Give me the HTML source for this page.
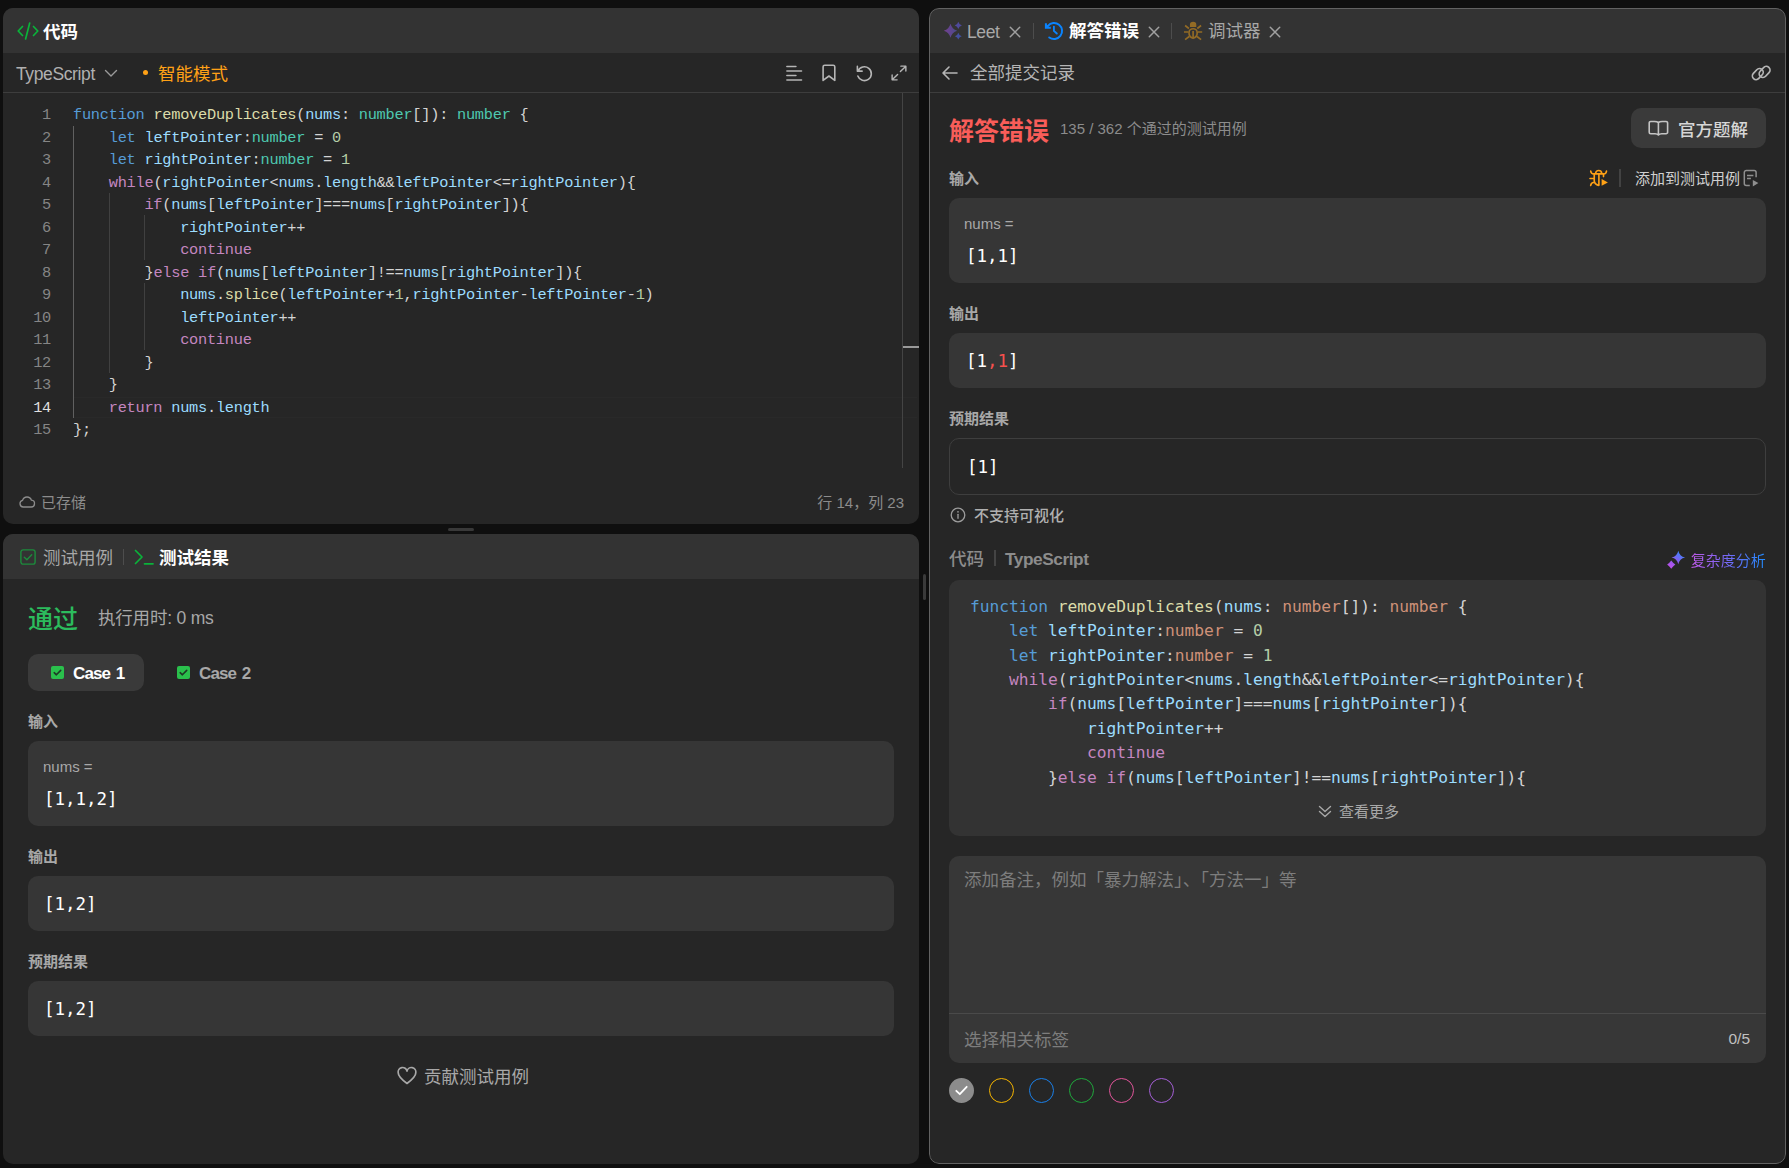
<!DOCTYPE html>
<html lang="zh-CN">
<head>
<meta charset="utf-8">
<title>LeetCode</title>
<style>
*{box-sizing:border-box;margin:0;padding:0}
html,body{width:1789px;height:1168px;overflow:hidden;background:#0f0f0f}
body{position:relative;font-family:"Liberation Sans","Noto Sans CJK SC",sans-serif;color:#f5f5f5;font-size:17.5px;-webkit-font-smoothing:antialiased}
.abs{position:absolute}
.panel{position:absolute;background:#262626;border-radius:10px;overflow:hidden}
.hdr{position:absolute;left:0;top:0;right:0;height:45px;background:#333333}
.t{position:absolute;white-space:nowrap;line-height:1;}
.b{font-weight:700}
.g{color:#a3a3a3}
.mono{font-family:"DejaVu Sans Mono","Liberation Mono",monospace;font-size:17.5px !important;letter-spacing:-0.03px}
.box{position:absolute;background:#363636;border-radius:10px}
.hline{position:absolute;height:1px;background:#3d3d3d}
.vline{position:absolute;width:1px;background:#4a4a4a}
svg{position:absolute;overflow:visible}
/* editor */
.ed{position:absolute;left:0;top:0;font-family:"Liberation Mono",monospace;font-size:15.3px;letter-spacing:-0.25px;line-height:22.5px;white-space:pre;color:#d4d4d4}
.ln{position:absolute;white-space:pre;width:48px;text-align:right;font-family:"Liberation Mono",monospace;font-size:15.3px;letter-spacing:-0.25px;line-height:22.5px;color:#858585}
.k{color:#569cd6}.c{color:#c586c0}.ty{color:#4ec9b0}.v{color:#9cdcfe}.n{color:#b5cea8}.f{color:#dcdcaa}.p{color:#d4d4d4}
/* right code */
.rc{position:absolute;font-family:"DejaVu Sans Mono","Liberation Mono",monospace;font-size:16.25px;letter-spacing:-0.03px;line-height:24.4px;white-space:pre;color:#d4d4d4}
.rc .ty{color:#ce9178}
</style>
</head>
<body>

<!-- ============ LEFT TOP PANEL: code editor ============ -->
<div class="panel" id="p1" style="left:3px;top:8px;width:916px;height:516px">
  <div class="hdr"></div>
  <!-- code icon -->
  <svg style="left:14px;top:14px" width="22" height="18" viewBox="0 0 22 18" fill="none" stroke="#0ab33a" stroke-width="1.7" stroke-linecap="round" stroke-linejoin="round"><path d="M5.5 4.5L1.2 9l4.3 4.5M16.5 4.5L20.8 9l-4.3 4.5M12.7 1L8.6 17"/></svg>
  <div class="t b" style="left:40px;top:15.5px;font-size:17.5px;color:#fff">代码</div>
  <!-- toolbar -->
  <div class="t" style="left:13px;top:57.5px;font-size:17.5px;letter-spacing:-0.38px;color:#b0b0b0" id="ts1">TypeScript</div>
  <svg style="left:101px;top:61px" width="14" height="9" viewBox="0 0 14 9" fill="none" stroke="#9a9a9a" stroke-width="1.4" stroke-linecap="round" stroke-linejoin="round"><path d="M1.5 1.5L7 7l5.5-5.5"/></svg>
  <div class="abs" style="left:140px;top:62px;width:5px;height:5px;border-radius:50%;background:#ffa116"></div>
  <div class="t" style="left:155px;top:57.5px;font-size:17.5px;color:#ffa116">智能模式</div>
  <!-- toolbar icons -->
  <svg style="left:782px;top:55.8px" width="18" height="18" viewBox="0 0 18 18" fill="none" stroke="#b5b5b5" stroke-width="1.6" stroke-linecap="round"><path d="M1.9 2.5h9M1.9 7h14.6M1.9 11.5h9M1.9 16h14.6"/></svg>
  <svg style="left:818px;top:56px" width="16" height="20" viewBox="0 0 16 20" fill="none" stroke="#b5b5b5" stroke-width="1.6" stroke-linejoin="round"><path d="M2.1 2.8a1.6 1.6 0 0 1 1.6-1.6h8.500a1.600 1.600 0 0 1 1.600 1.600v13.600l-5.850-4.400-5.850 4.400z"/></svg>
  <svg style="left:851.5px;top:55.5px" width="19" height="19" viewBox="0 0 20 20" fill="none" stroke="#b5b5b5" stroke-width="1.7" stroke-linecap="round" stroke-linejoin="round"><path d="M2.5 2.5v5h5M3.2 7.3A7.3 7.3 0 1 1 3 12.6"/></svg>
  <svg style="left:888px;top:57px" width="16" height="16" viewBox="0 0 17 17" fill="none" stroke="#b5b5b5" stroke-width="1.5" stroke-linecap="round" stroke-linejoin="round"><path d="M10.5 1.2h5.3v5.3M15.5 1.5L10 7M6.5 15.8H1.2v-5.3M1.5 15.5L7 10"/></svg>
  <div class="hline" style="left:0;right:0;top:84px"></div>
  <!-- editor -->
  <div class="abs" style="left:70px;top:389px;width:844px;height:21px;border-top:1px solid #292929;border-bottom:1px solid #292929"></div>
  <div class="abs" style="left:70px;top:118px;width:1px;height:292px;background:#606060"></div>
  <div class="abs" style="left:106px;top:185px;width:1px;height:180px;background:#404040"></div>
  <div class="abs" style="left:141px;top:207px;width:1px;height:45px;background:#404040"></div>
  <div class="abs" style="left:141px;top:275px;width:1px;height:67px;background:#404040"></div>
  <div class="abs" style="left:899px;top:85px;width:1px;height:375px;background:#444"></div>
  <div class="abs" style="left:900px;top:338px;width:16px;height:2px;background:#9a9a9a"></div>
  <div class="ln" style="left:0;top:96.25px">1
2
3
4
5
6
7
8
9
10
11
12
13
<span style="color:#e0e0e0">14</span>
15</div>
  <div class="ed" style="left:70px;top:96.25px"><span class="k">function</span> <span class="f">removeDuplicates</span>(<span class="v">nums</span>: <span class="ty">number</span>[]): <span class="ty">number</span> {
    <span class="k">let</span> <span class="v">leftPointer</span>:<span class="ty">number</span> = <span class="n">0</span>
    <span class="k">let</span> <span class="v">rightPointer</span>:<span class="ty">number</span> = <span class="n">1</span>
    <span class="c">while</span>(<span class="v">rightPointer</span>&lt;<span class="v">nums</span>.<span class="v">length</span>&amp;&amp;<span class="v">leftPointer</span>&lt;=<span class="v">rightPointer</span>){
        <span class="c">if</span>(<span class="v">nums</span>[<span class="v">leftPointer</span>]===<span class="v">nums</span>[<span class="v">rightPointer</span>]){
            <span class="v">rightPointer</span>++
            <span class="c">continue</span>
        }<span class="c">else</span> <span class="c">if</span>(<span class="v">nums</span>[<span class="v">leftPointer</span>]!==<span class="v">nums</span>[<span class="v">rightPointer</span>]){
            <span class="v">nums</span>.<span class="f">splice</span>(<span class="v">leftPointer</span>+<span class="n">1</span>,<span class="v">rightPointer</span>-<span class="v">leftPointer</span>-<span class="n">1</span>)
            <span class="v">leftPointer</span>++
            <span class="c">continue</span>
        }
    }
    <span class="c">return</span> <span class="v">nums</span>.<span class="v">length</span>
};</div>
  <!-- footer -->
  <svg style="left:16px;top:487px" width="16" height="13" viewBox="0 0 16 13" fill="none" stroke="#8c8c8c" stroke-width="1.3" stroke-linejoin="round"><path d="M4.2 12A3.4 3.4 0 0 1 3.6 5.3 4.6 4.6 0 0 1 12.4 5.2 3.4 3.4 0 0 1 11.8 12z"/></svg>
  <div class="t" style="left:38px;top:486.800px;font-size:15px;color:#8c8c8c">已存储</div>
  <div class="t" style="right:15px;top:486.800px;font-size:15px;color:#8c8c8c">行 14，列 23</div>
</div>

<!-- resize handle -->
<div class="abs" style="left:448px;top:527.700px;width:26px;height:3px;border-radius:2px;background:#393939"></div>
<div class="abs" style="left:923px;top:574px;width:3px;height:26px;border-radius:2px;background:#3a3a3a"></div>

<!-- ============ LEFT BOTTOM PANEL: test result ============ -->
<div class="panel" id="p2" style="left:3px;top:534px;width:916px;height:630px">
  <div class="hdr"></div>
  <!-- tab icons -->
  <svg style="left:17px;top:15px" width="16" height="16" viewBox="0 0 16 16" fill="none" stroke="#1c8c3c" stroke-width="1.4" stroke-linecap="round" stroke-linejoin="round"><rect x="0.9" y="0.9" width="14.2" height="14.2" rx="2.2"/><path d="M4.3 8.2l2.6 2.5 4.8-5"/></svg>
  <div class="t" style="left:40px;top:15.700px;font-size:17.500px;color:#a8a8a8">测试用例</div>
  <div class="abs" style="left:120px;top:15px;width:1px;height:16px;background:#4d4d4d"></div>
  <svg style="left:131px;top:15px" width="20" height="16" viewBox="0 0 20 16" fill="none" stroke="#0ab33a" stroke-width="1.7" stroke-linecap="round" stroke-linejoin="round"><path d="M1.5 1.5L8 8l-6.5 6.5M10.5 14.8H19"/></svg>
  <div class="t b" style="left:156px;top:15.700px;font-size:17.500px;color:#fff">测试结果</div>
  <!-- result -->
  <div class="t" style="left:25px;top:72.500px;font-size:25px;font-weight:500;color:#2cbb5d">通过</div>
  <div class="t" style="left:95px;top:76px;font-size:17.500px;letter-spacing:-0.200px;color:#a8a8a8">执行用时: 0 ms</div>
  <!-- cases -->
  <div class="box" style="left:25px;top:120px;width:116px;height:37px;background:#3a3a3a"></div>
  <svg style="left:47.600px;top:131.500px" width="13" height="13" viewBox="0 0 13 13"><rect width="13" height="13" rx="2" fill="#2ac04c"/><path d="M3.2 6.7l2.2 2.1 4.3-4.4" fill="none" stroke="#1e3a26" stroke-width="1.6" stroke-linecap="round" stroke-linejoin="round"/></svg>
  <div class="t b" style="left:70px;top:130.800px;font-size:17px;letter-spacing:-0.900px;word-spacing:2px;color:#fff">Case 1</div>
  <svg style="left:173.600px;top:131.500px" width="13" height="13" viewBox="0 0 13 13"><rect width="13" height="13" rx="2" fill="#2ac04c"/><path d="M3.2 6.7l2.2 2.1 4.3-4.4" fill="none" stroke="#1e3a26" stroke-width="1.6" stroke-linecap="round" stroke-linejoin="round"/></svg>
  <div class="t b" style="left:196px;top:130.800px;font-size:17px;letter-spacing:-0.900px;word-spacing:2px;color:#a8a8a8">Case 2</div>
  <!-- input -->
  <div class="t b" style="left:25px;top:180px;font-size:15px;color:#a8a8a8">输入</div>
  <div class="box" style="left:25px;top:207px;width:866px;height:85px"></div>
  <div class="t" style="left:40px;top:225px;font-size:15px;color:#a8a8a8">nums =</div>
  <div class="t mono" style="left:41px;top:256.500px;font-size:16.25px;color:#fff">[1,1,2]</div>
  <!-- output -->
  <div class="t b" style="left:25px;top:315px;font-size:15px;color:#a8a8a8">输出</div>
  <div class="box" style="left:25px;top:342px;width:866px;height:55px"></div>
  <div class="t mono" style="left:41px;top:361.500px;font-size:16.25px;color:#fff">[1,2]</div>
  <!-- expected -->
  <div class="t b" style="left:25px;top:420px;font-size:15px;color:#a8a8a8">预期结果</div>
  <div class="box" style="left:25px;top:447px;width:866px;height:55px"></div>
  <div class="t mono" style="left:41px;top:466.500px;font-size:16.25px;color:#fff">[1,2]</div>
  <!-- contribute -->
  <svg style="left:394px;top:533px" width="20" height="18" viewBox="0 0 20 18" fill="none" stroke="#a8a8a8" stroke-width="1.7" stroke-linejoin="round"><path d="M10 16.5C6 13.5 1.2 10 1.2 5.8A4.4 4.4 0 0 1 10 4.2 4.4 4.4 0 0 1 18.8 5.8C18.8 10 14 13.5 10 16.5z"/></svg>
  <div class="t" style="left:421px;top:534.500px;font-size:17.500px;color:#a8a8a8">贡献测试用例</div>
</div>

<!-- ============ RIGHT PANEL: submission ============ -->
<div class="panel" id="p3" style="left:929px;top:8px;width:857px;height:1156px">
  <div class="hdr"></div>
  <!-- tabs -->
  <svg style="left:14px;top:12px" width="20" height="22" viewBox="0 0 20 22"><defs><linearGradient id="sg" x1="0" y1="0" x2="1" y2="0"><stop offset="0" stop-color="#73408f"/><stop offset="1" stop-color="#4b4a8c"/></linearGradient></defs><path fill="url(#sg)" d="M7.5 3.85Q8.97 9.23 14.20 10.75Q8.97 12.27 7.5 17.65Q6.03 12.27 0.80 10.75Q6.03 9.23 7.5 3.85z"/><path fill="#4f4a9c" d="M15.3 1.80Q16.02 4.68 18.90 5.4Q16.02 6.12 15.3 9.00Q14.58 6.12 11.70 5.4Q14.58 4.68 15.3 1.80z"/><path fill="#43509f" d="M15.3 12.80Q15.98 15.52 18.70 16.2Q15.98 16.88 15.3 19.60Q14.62 16.88 11.90 16.2Q14.62 15.52 15.3 12.80z"/></svg>
  <div class="t" style="left:38px;top:15.500px;font-size:17.500px;letter-spacing:-0.400px;color:#a8a8a8">Leet</div>
  <svg style="left:81px;top:18.500px" width="10" height="10" viewBox="0 0 10 10"><path d="M0.300 0.300l9.400 9.400M9.700 0.300l-9.400 9.400" fill="none" stroke="#a0a0a0" stroke-width="1.500" stroke-linecap="round"/></svg>
  <div class="abs" style="left:104px;top:15px;width:1px;height:16px;background:#4d4d4d"></div>
  <svg style="left:114px;top:12px" width="22" height="22" viewBox="0 0 22 22" fill="none" stroke="#0a84ff" stroke-width="2" stroke-linecap="round" stroke-linejoin="round"><path d="M4.9 5.96A8 8 0 1 1 6.25 17.47"/><path d="M2.9 3.2V7.8H7.800" stroke-linecap="butt" stroke-linejoin="miter"/><path d="M2.9 3.900L6.800 7.800H2.900z" fill="#0a84ff" stroke="none"/><path d="M10.900 6.600V10.900L13.800 13.500" stroke-width="1.900"/></svg>
  <div class="t b" style="left:140px;top:15px;font-size:17.5px;color:#fff">解答错误</div>
  <svg style="left:220px;top:18.500px" width="10" height="10" viewBox="0 0 10 10"><path d="M0.300 0.300l9.400 9.400M9.700 0.300l-9.400 9.400" fill="none" stroke="#a0a0a0" stroke-width="1.500" stroke-linecap="round"/></svg>
  <div class="abs" style="left:242px;top:15px;width:1px;height:16px;background:#4d4d4d"></div>
  <svg style="left:254px;top:12px" width="21" height="22" viewBox="0 0 21 22" fill="none" stroke="#936b25" stroke-width="1.650" stroke-linecap="butt"><path d="M6.900 7.100V5.050a3.200 3.200 0 0 1 6.400 0V7.100z" fill="#936b25" stroke="none"/><path d="M6 12.800a4.100 4.100 0 0 1 8.200 0c0 3-2 5-4.100 5.500-2.100-.5-4.100-2.500-4.100-5.500z"/><path d="M10.100 10.900V18.300M2.100 5.500L5.900 8.500M18.100 5.500L14.300 8.500M1 12H5.400M19.200 12H14.800M2.100 19.700L6.200 16.500M18.100 19.700L14 16.500"/></svg>
  <div class="t" style="left:279px;top:15px;font-size:17.5px;color:#a8a8a8">调试器</div>
  <svg style="left:341px;top:18.500px" width="10" height="10" viewBox="0 0 10 10"><path d="M0.300 0.300l9.400 9.400M9.700 0.300l-9.400 9.400" fill="none" stroke="#a0a0a0" stroke-width="1.500" stroke-linecap="round"/></svg>
  <!-- toolbar -->
  <svg style="left:13px;top:58px" width="16" height="14" viewBox="0 0 16 14" fill="none" stroke="#b5b5b5" stroke-width="1.600" stroke-linecap="round" stroke-linejoin="round"><path d="M7 1L1 7l6 6M1.300 7H15"/></svg>
  <div class="t" style="left:41px;top:57px;font-size:17.5px;color:#b5b5b5">全部提交记录</div>
  <svg style="left:822px;top:56px" width="21" height="18" viewBox="0 0 21 18" fill="none" stroke="#b5b5b5" stroke-width="1.700" stroke-linecap="round"><rect x="-6.200" y="-3.700" width="12.400" height="7.400" rx="3.700" transform="translate(6.800 10.100) rotate(-47)"/><rect x="-6.200" y="-3.700" width="12.400" height="7.400" rx="3.700" transform="translate(13.600 7.900) rotate(-47)"/></svg>
  <div class="hline" style="left:0;right:0;top:84px"></div>
  <!-- title row -->
  <div class="t b" style="left:20px;top:111px;font-size:25px;color:#f95d59">解答错误</div>
  <div class="t" style="left:131px;top:113px;font-size:15px;color:#8c8c8c">135 / 362 个通过的测试用例</div>
  <div class="box" style="left:702px;top:100px;width:135px;height:40px;background:#3a3a3a"></div>
  <svg style="left:719px;top:112px" width="21" height="17" viewBox="0 0 21 17" fill="none" stroke="#c4c4c4" stroke-width="1.600" stroke-linejoin="round"><path d="M10.400 2.600C9.600 1.800 8.300 1.500 6.500 1.500H2.700A1.500 1.500 0 0 0 1.200 3V12.200A1.500 1.500 0 0 0 2.700 13.700H7C8.600 13.700 9.700 14.100 10.400 15 11.100 14.100 12.200 13.700 13.800 13.700H18.100A1.500 1.500 0 0 0 19.600 12.200V3A1.500 1.500 0 0 0 18.100 1.500H14.300C12.500 1.500 11.200 1.800 10.400 2.600zM10.400 2.600V15"/></svg>
  <div class="t" style="left:749px;top:113.500px;font-size:17.500px;font-weight:500;color:#d6d6d6">官方题解</div>
  <!-- input -->
  <div class="t" style="left:20px;top:163px;font-size:15px;font-weight:700;color:#a8a8a8">输入</div>
  <svg style="left:659px;top:159px" width="21" height="20" viewBox="0 0 21 20" fill="none" stroke="#ffa116" stroke-width="1.650" stroke-linecap="round" stroke-linejoin="round"><path d="M7.600 6.500a3 3 0 0 1 6.100 0M5.700 6.800H15.500V9.600M6.250 6.800V13.800C6.250 16.200 8.500 18.300 10.900 18.300V6.800M2.700 4Q2.900 6.800 6.100 7.200M18.500 4Q18.300 6.800 15.500 7.200M2 11.450H6M2.700 18.500Q2.900 15.800 6.100 15.300"/><path d="M13.650 12L19.900 15.400 13.650 18.850z" fill="#ffa116" stroke="none"/></svg>
  <div class="abs" style="left:690px;top:161px;width:2px;height:18px;background:#424242"></div>
  <div class="t" style="left:706px;top:163px;font-size:15px;color:#d0d0d0">添加到测试用例</div>
  <svg style="left:814px;top:160px" width="17" height="20" viewBox="0 0 17 20" fill="none" stroke="#8f8f8f" stroke-width="1.500" stroke-linecap="butt" stroke-linejoin="round"><path d="M13.100 9.300V4.400a2 2 0 0 0-2-2H3.300a2 2 0 0 0-2 2V15.400a2 2 0 0 0 2 2H6.800M4 7.400H10.400M4 10.600H7.900"/><path d="M9.800 11.900L15.400 15.100 9.800 18.400z" fill="#8f8f8f" stroke="none"/></svg>
  <div class="box" style="left:20px;top:190px;width:817px;height:85px"></div>
  <div class="t" style="left:35px;top:207.700px;font-size:15px;color:#a8a8a8">nums =</div>
  <div class="t mono" style="left:37px;top:240px;font-size:16.250px;color:#fff">[1,1]</div>
  <!-- output -->
  <div class="t" style="left:20px;top:298px;font-size:15px;font-weight:700;color:#a8a8a8">输出</div>
  <div class="box" style="left:20px;top:325px;width:817px;height:55px"></div>
  <div class="t mono" style="left:37px;top:345px;font-size:16.250px;color:#fff">[1<span style="color:#f8504d">,1</span>]</div>
  <!-- expected -->
  <div class="t" style="left:20px;top:403px;font-size:15px;font-weight:700;color:#a8a8a8">预期结果</div>
  <div class="box" style="left:20px;top:430px;width:817px;height:57px;background:#262626;border:1px solid #3e3e3e"></div>
  <div class="t mono" style="left:38px;top:451px;font-size:16.250px;color:#fff">[1]</div>
  <!-- visualisation -->
  <svg style="left:21px;top:499px" width="16" height="16" viewBox="0 0 16 16" fill="none" stroke="#9c9c9c" stroke-width="1.300" stroke-linecap="round"><circle cx="8" cy="8" r="6.800"/><path d="M8 7.300v4"/><circle cx="8" cy="4.800" r=".85" fill="#9c9c9c" stroke="none"/></svg>
  <div class="t" style="left:45px;top:500px;font-size:15px;font-weight:500;color:#b0b0b0">不支持可视化</div>
  <!-- code header -->
  <div class="t" style="left:20px;top:542.700px;font-size:17.500px;font-weight:500;color:#8c8c8c">代码</div>
  <div class="abs" style="left:64.500px;top:542px;width:2px;height:16px;background:#444"></div>
  <div class="t b" style="left:76px;top:542.700px;font-size:17.300px;letter-spacing:-0.450px;color:#8c8c8c">TypeScript</div>
  <svg style="left:738px;top:542px" width="19" height="20" viewBox="0 0 19 20"><defs><linearGradient id="sg2" x1="0.2" y1="1" x2="0.8" y2="0"><stop offset="0" stop-color="#c050e8"/><stop offset="0.45" stop-color="#8a5cf0"/><stop offset="1" stop-color="#2f8cff"/></linearGradient></defs><path fill="url(#sg2)" d="M11.3 0.70Q12.46 6.34 18.10 7.5Q12.46 8.66 11.3 14.30Q10.14 8.66 4.50 7.5Q10.14 6.34 11.3 0.70z M4.25 10.50Q5.97 12.88 8.35 14.6Q5.97 16.32 4.25 18.70Q2.53 16.32 0.15 14.6Q2.53 12.88 4.25 10.50z"/></svg>
  <div class="t" style="left:761.700px;top:545px;font-size:15px;background:linear-gradient(90deg,#c05ae8,#7a66f5 45%,#1f8cff);-webkit-background-clip:text;background-clip:text;color:transparent">复杂度分析</div>
  <!-- code box -->
  <div class="box" style="left:20px;top:572px;width:817px;height:256px;background:#333333"></div>
  <div class="rc" style="left:41px;top:586.800px"><span class="k">function</span> <span class="f">removeDuplicates</span>(<span class="v">nums</span>: <span class="ty">number</span>[]): <span class="ty">number</span> {
    <span class="k">let</span> <span class="v">leftPointer</span>:<span class="ty">number</span> = <span class="n">0</span>
    <span class="k">let</span> <span class="v">rightPointer</span>:<span class="ty">number</span> = <span class="n">1</span>
    <span class="c">while</span>(<span class="v">rightPointer</span>&lt;<span class="v">nums</span>.<span class="v">length</span>&amp;&amp;<span class="v">leftPointer</span>&lt;=<span class="v">rightPointer</span>){
        <span class="c">if</span>(<span class="v">nums</span>[<span class="v">leftPointer</span>]===<span class="v">nums</span>[<span class="v">rightPointer</span>]){
            <span class="v">rightPointer</span>++
            <span class="c">continue</span>
        }<span class="c">else</span> <span class="c">if</span>(<span class="v">nums</span>[<span class="v">leftPointer</span>]!==<span class="v">nums</span>[<span class="v">rightPointer</span>]){</div>
  <svg style="left:389px;top:797px" width="14" height="13" viewBox="0 0 14 13" fill="none" stroke="#a8a8a8" stroke-width="1.400" stroke-linecap="round" stroke-linejoin="round"><path d="M1.500 1.500L7 6.500l5.500-5M1.500 6.500L7 11.500l5.500-5"/></svg>
  <div class="t" style="left:410px;top:796px;font-size:15px;color:#a8a8a8">查看更多</div>
  <!-- notes -->
  <div class="box" style="left:20px;top:848px;width:817px;height:207px;background:#373737"></div>
  <div class="hline" style="left:20px;width:817px;top:1005px;background:#4a4a4a"></div>
  <div class="t" style="left:35px;top:864px;font-size:17.500px;color:#7d7d7d">添加备注，例如「暴力解法」、「方法一」等</div>
  <div class="t" style="left:35px;top:1023.700px;font-size:17.500px;color:#7d7d7d">选择相关标签</div>
  <div class="t" style="left:799.500px;top:1022.800px;font-size:15.500px;color:#c0c0c0">0/5</div>
  <!-- colours -->
  <div class="abs" style="left:20px;top:1070px;width:25px;height:25px;border-radius:50%;background:#8c8c8c"></div>
  <svg style="left:26px;top:1077px" width="13" height="11" viewBox="0 0 13 11" fill="none" stroke="#fff" stroke-width="1.800" stroke-linecap="round" stroke-linejoin="round"><path d="M1.300 5.800l3.500 3.400 6.900-7.400"/></svg>
  <div class="abs" style="left:60px;top:1070px;width:25px;height:25px;border-radius:50%;border:1.500px solid #f5b400"></div>
  <div class="abs" style="left:100px;top:1070px;width:25px;height:25px;border-radius:50%;border:1.500px solid #1a7fe8"></div>
  <div class="abs" style="left:140px;top:1070px;width:25px;height:25px;border-radius:50%;border:1.500px solid #1fa83c"></div>
  <div class="abs" style="left:180px;top:1070px;width:25px;height:25px;border-radius:50%;border:1.500px solid #e0559a"></div>
  <div class="abs" style="left:220px;top:1070px;width:25px;height:25px;border-radius:50%;border:1.500px solid #a45fd6"></div>
  <!-- focus border -->
  <div class="abs" style="left:0;top:0;right:0;bottom:0;border:1px solid #626262;border-radius:10px;pointer-events:none"></div>
</div>

</body>
</html>
